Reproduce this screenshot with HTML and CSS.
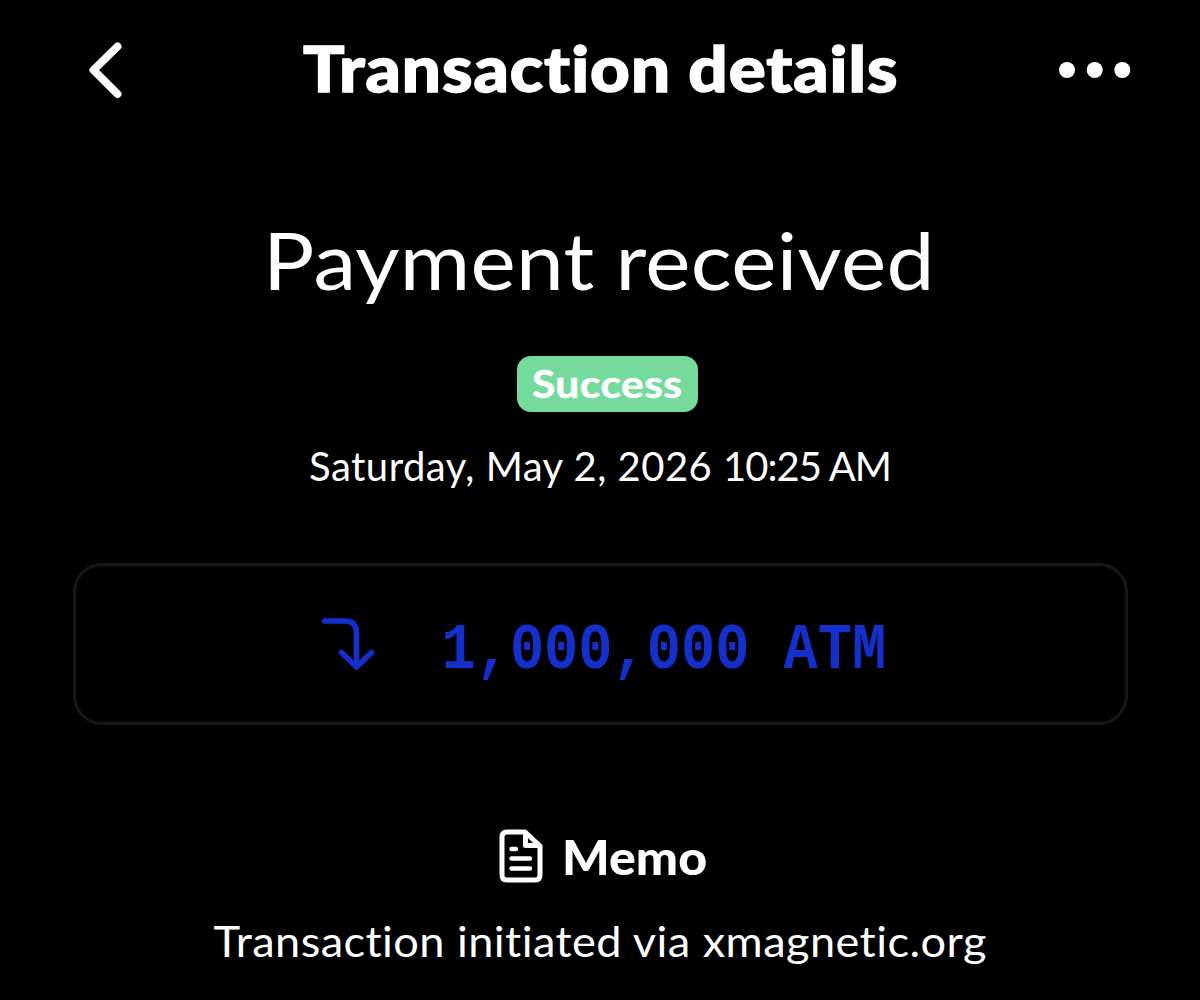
FILE: index.html
```html
<!DOCTYPE html>
<html lang="en">
<head>
<meta charset="utf-8">
<title>Transaction details</title>
<link rel="stylesheet" href="styles.css">
</head>
<body>
<header class="topbar">
  <svg class="back" viewBox="0 0 34 58" fill="none" stroke="currentColor" stroke-width="8" stroke-linecap="round" stroke-linejoin="round"><path d="M29.5 5.5L5.5 29L29.5 53"/></svg>
  <h1 class="title">Transaction details</h1>
  <svg class="more" viewBox="0 0 72 16" fill="currentColor"><circle cx="8" cy="8" r="8"/><circle cx="35.7" cy="8" r="8"/><circle cx="63.3" cy="8" r="8"/></svg>
</header>
<main>
  <h2 class="status">Payment received</h2>
  <div class="badge"><span class="badge-text">Success</span></div>
  <p class="date">Saturday, May 2, 2026 <span class="time">10:25 AM</span></p>
  <section class="amount">
    <svg class="arrow" viewBox="0 0 54 54" fill="none" stroke="currentColor" stroke-width="5.6" stroke-linecap="round" stroke-linejoin="round"><path d="M3.5 4H24Q35.5 4 35.5 16V50M20.5 35.5L35.5 50L50.5 35.5"/></svg>
    <span class="value">1,000,000 ATM</span>
  </section>
  <h3 class="memo">
    <svg class="doc" viewBox="0 0 44 54" fill="none" stroke="currentColor" stroke-width="5" stroke-linecap="round" stroke-linejoin="round"><path d="M8 3H26L41 17V46Q41 51 36 51H8Q3 51 3 46V8Q3 3 8 3ZM26.5 4V16.5H40"/><path stroke-width="4.4" d="M12.5 20H17M12.5 29.5H31M12.5 39.5H31"/></svg>
    <span class="memo-text">Memo</span>
  </h3>
  <p class="note">Transaction initiated via xmagnetic.org</p>
</main>
</body>
</html>
```
FILE: styles.css
```css
* { box-sizing: border-box; margin: 0; padding: 0; }
body {
  width: 1200px;
  height: 1000px;
  overflow: hidden;
  background: #000;
  color: #fff;
  font-family: Lato, "Open Sans", sans-serif;
  white-space: nowrap;
}
.topbar {
  display: grid;
  grid-template-columns: 72px 1fr 72px;
  align-items: center;
  height: 140px;
  padding: 0 69px 0 88px;
}
.back { width: 34px; height: 58px; }
.more { width: 72px; height: 16px; }
.title {
  justify-self: center;
  margin: 0 0 5px -18px;
  font-size: 62px;
  line-height: 80px;
  font-weight: 900;
  letter-spacing: 0.9px;
  -webkit-text-stroke: 1.4px #fff;
  transform: scaleX(1.112);
}
main { display: flex; flex-direction: column; align-items: center; }
.status {
  margin: 69px 3px 0 0;
  font-size: 80px;
  line-height: 100px;
  font-weight: 400;
  letter-spacing: 0.3px;
  word-spacing: -1px;
  transform: scaleX(1.07);
}
.badge {
  display: flex;
  justify-content: center;
  width: 181px;
  height: 56px;
  margin: 47px 0 0 15px;
  border-radius: 14px;
  background: #75db9c;
  font-size: 38px;
  line-height: 54px;
  font-weight: 700;
}
.badge-text { letter-spacing: 0.4px; -webkit-text-stroke: 0.5px #fff; transform: scaleX(1.12); }
.date { margin-top: 29px; font-size: 40px; line-height: 50px; letter-spacing: 0.5px; }
.time { letter-spacing: -1px; }
.amount {
  display: flex;
  align-items: center;
  width: 1055px;
  height: 162px;
  margin-top: 72px;
  padding-left: 245px;
  border: 3px solid #17171b;
  border-radius: 29px;
  color: #142fca;
}
.arrow { width: 54px; height: 54px; }
.value {
  margin: 13px 0 0 67px;
  font: 700 57px/70px "Liberation Mono", monospace;
  transform: scaleY(1.13);
}
.memo { display: flex; align-items: center; gap: 19px; height: 60px; margin-top: 101px; font-size: 48px; font-weight: 900; }
.memo-text { transform: scaleX(1.045); transform-origin: left; }
.doc { width: 44px; height: 54px; }
.note {
  margin-top: 30px;
  font-size: 43px;
  line-height: 50px;
  letter-spacing: 0.4px;
  transform: scaleX(1.05);
}
```
